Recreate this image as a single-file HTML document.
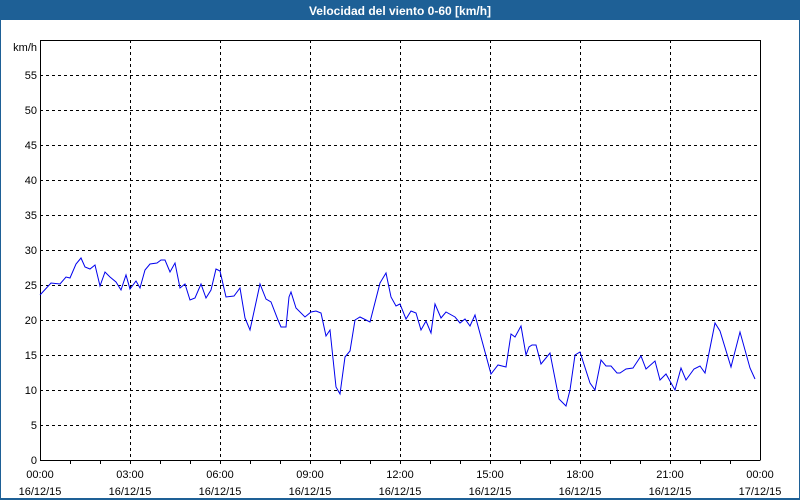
<!DOCTYPE html>
<html><head><meta charset="utf-8"><style>
html,body{margin:0;padding:0;background:#fff}
body{width:800px;height:500px;overflow:hidden;position:relative;font-family:"Liberation Sans",sans-serif}
</style></head><body>
<svg width="800" height="500" xmlns="http://www.w3.org/2000/svg" style="position:absolute;left:0;top:0">
<rect x="0" y="0" width="800" height="500" fill="#1e6096"/>
<rect x="1" y="20" width="798" height="478" fill="#fff"/>
<text x="400" y="15" text-anchor="middle" font-size="12" font-weight="bold" fill="#fff" font-family="Liberation Sans">Velocidad del viento 0-60 [km/h]</text>
<g stroke="#000" stroke-width="1" stroke-dasharray="3,3" shape-rendering="crispEdges">
<line x1="40" x2="760" y1="425.5" y2="425.5"/><line x1="40" x2="760" y1="390.5" y2="390.5"/><line x1="40" x2="760" y1="355.5" y2="355.5"/><line x1="40" x2="760" y1="320.5" y2="320.5"/><line x1="40" x2="760" y1="285.5" y2="285.5"/><line x1="40" x2="760" y1="250.5" y2="250.5"/><line x1="40" x2="760" y1="215.5" y2="215.5"/><line x1="40" x2="760" y1="180.5" y2="180.5"/><line x1="40" x2="760" y1="145.5" y2="145.5"/><line x1="40" x2="760" y1="110.5" y2="110.5"/><line x1="40" x2="760" y1="75.5" y2="75.5"/>
<line y1="40" y2="460" x1="130.5" x2="130.5"/><line y1="40" y2="460" x1="220.5" x2="220.5"/><line y1="40" y2="460" x1="310.5" x2="310.5"/><line y1="40" y2="460" x1="400.5" x2="400.5"/><line y1="40" y2="460" x1="490.5" x2="490.5"/><line y1="40" y2="460" x1="580.5" x2="580.5"/><line y1="40" y2="460" x1="670.5" x2="670.5"/>
</g>
<g stroke="#000" stroke-width="1" shape-rendering="crispEdges" fill="none">
<path d="M40.5 40 V460.5 H760 M760.5 40 V460.5 M40 40.5 H760"/>
<path d="M70.5 460 v4 M100.5 460 v4 M130.5 460 v4 M160.5 460 v4 M190.5 460 v4 M220.5 460 v4 M250.5 460 v4 M280.5 460 v4 M310.5 460 v4 M340.5 460 v4 M370.5 460 v4 M400.5 460 v4 M430.5 460 v4 M460.5 460 v4 M490.5 460 v4 M520.5 460 v4 M550.5 460 v4 M580.5 460 v4 M610.5 460 v4 M640.5 460 v4 M670.5 460 v4 M700.5 460 v4 M730.5 460 v4"/>
</g>
<polyline fill="none" stroke="#0000ee" stroke-width="1" points="40,295 51,283 60,284 66,277 70,278 76,264 81,258 85,267 90,269 95,265 100,286 105,272 110,277 116,282 121,290 126,275 130,289 136,281 140,288 145,270 150,264 157,263 161,260 165,260 170,272 175,263 180,288 185,284 190,300 195,298 201,284 206,298 211,290 216,269 220,271 226,297 234,296 240,288 245,318 250,330 260,284 266,299 271,302 278,320 281,327 286,327 289,297 291,292 296,308 305,317 311,312 316,311 321,313 326,336 330,330 336,387 340,394 345,357 350,351 355,320 360,317 370,322 380,283 386,273 391,297 396,306 400,304 406,319 411,311 416,313 421,330 426,321 431,333 435,304 441,318 446,312 455,317 460,323 465,319 470,326 475,315 491,374 498,365 506,367 511,334 515,337 521,326 526,355 529,347 532,345 536,345 541,364 550,353 559,399 566,406 570,390 575,355 580,352 590,383 595,390 601,360 606,366 611,366 617,373 620,373 626,369 633,368 641,356 646,369 655,361 660,380 666,374 675,390 681,368 686,380 694,369 700,366 705,373 715,323 720,331 731,367 740,332 750,368 755,379"/>
<g font-size="11" fill="#000" text-anchor="end" font-family="Liberation Sans">
<text x="37" y="51">km/h</text>
<text x="37" y="464">0</text><text x="37" y="429">5</text><text x="37" y="394">10</text><text x="37" y="359">15</text><text x="37" y="324">20</text><text x="37" y="289">25</text><text x="37" y="254">30</text><text x="37" y="219">35</text><text x="37" y="184">40</text><text x="37" y="149">45</text><text x="37" y="114">50</text><text x="37" y="79">55</text>
</g>
<g font-size="11" fill="#000" text-anchor="middle" font-family="Liberation Sans">
<text x="40" y="478">00:00</text><text x="40" y="495">16/12/15</text>
<text x="130" y="478">03:00</text><text x="130" y="495">16/12/15</text>
<text x="220" y="478">06:00</text><text x="220" y="495">16/12/15</text>
<text x="310" y="478">09:00</text><text x="310" y="495">16/12/15</text>
<text x="400" y="478">12:00</text><text x="400" y="495">16/12/15</text>
<text x="490" y="478">15:00</text><text x="490" y="495">16/12/15</text>
<text x="580" y="478">18:00</text><text x="580" y="495">16/12/15</text>
<text x="670" y="478">21:00</text><text x="670" y="495">16/12/15</text>
<text x="760" y="478">00:00</text><text x="760" y="495">17/12/15</text>
</g>
</svg>
</body></html>
